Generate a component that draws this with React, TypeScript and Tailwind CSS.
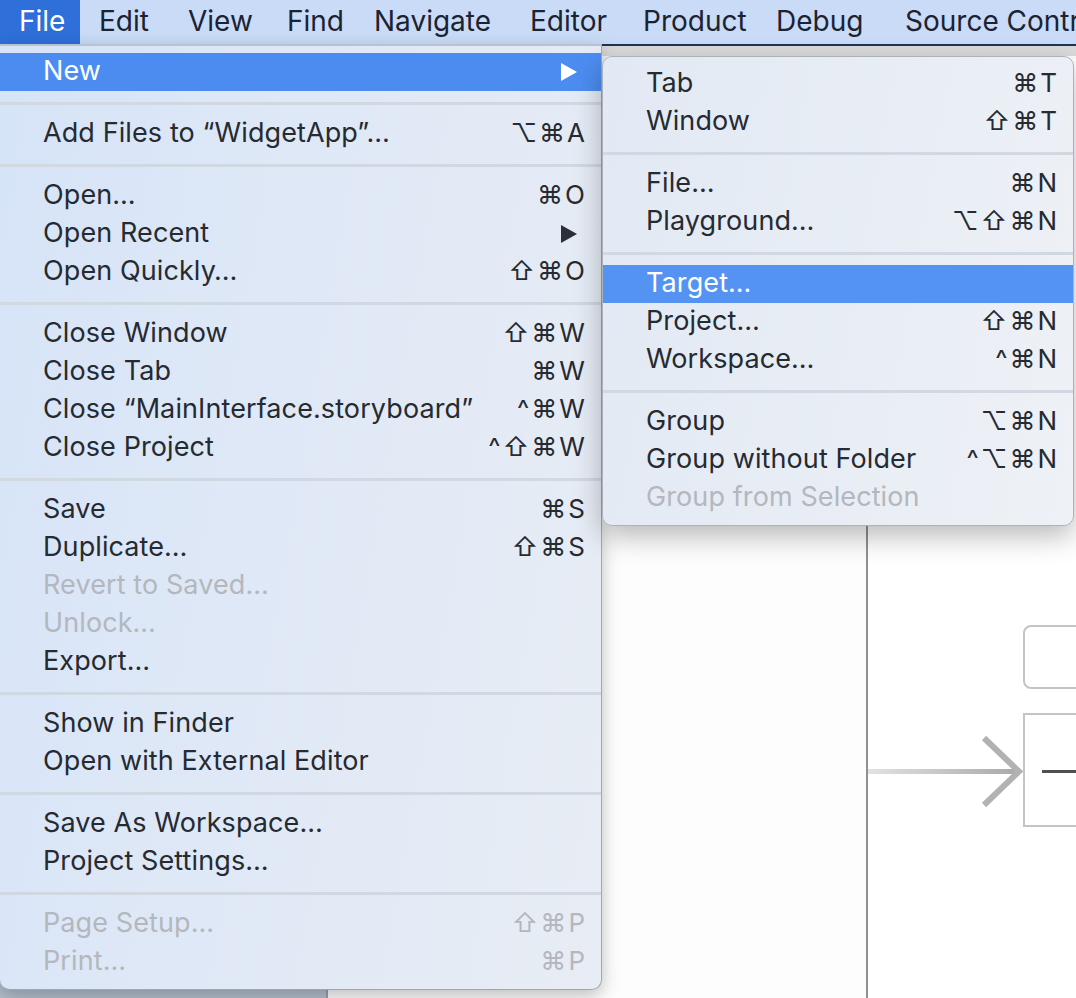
import type { ReactNode } from "react";

type Item =
	| { kind: "sep" }
	| { kind: "item"; label: string; shortcut?: string; arrow?: boolean; disabled?: boolean; active?: boolean };

const MENU_BAR = [
	{ label: "File", width: "w-[80px]" },
	{ label: "Edit", width: "w-[89px]" },
	{ label: "View", width: "w-[99px]" },
	{ label: "Find", width: "w-[87px]" },
	{ label: "Navigate", width: "w-[156px]" },
	{ label: "Editor", width: "w-[113px]" },
	{ label: "Product", width: "w-[133px]" },
	{ label: "Debug", width: "w-[129px]" },
	{ label: "Source Control", width: "w-[220px]" },
];

const FILE_MENU: Item[] = [
	{ kind: "item", label: "New", arrow: true, active: true },
	{ kind: "sep" },
	{ kind: "item", label: "Add Files to \u201cWidgetApp\u201d\u2026", shortcut: "\u2325\u2318A" },
	{ kind: "sep" },
	{ kind: "item", label: "Open\u2026", shortcut: "\u2318O" },
	{ kind: "item", label: "Open Recent", arrow: true },
	{ kind: "item", label: "Open Quickly\u2026", shortcut: "\u21e7\u2318O" },
	{ kind: "sep" },
	{ kind: "item", label: "Close Window", shortcut: "\u21e7\u2318W" },
	{ kind: "item", label: "Close Tab", shortcut: "\u2318W" },
	{ kind: "item", label: "Close \u201cMainInterface.storyboard\u201d", shortcut: "^\u2318W" },
	{ kind: "item", label: "Close Project", shortcut: "^\u21e7\u2318W" },
	{ kind: "sep" },
	{ kind: "item", label: "Save", shortcut: "\u2318S" },
	{ kind: "item", label: "Duplicate\u2026", shortcut: "\u21e7\u2318S" },
	{ kind: "item", label: "Revert to Saved\u2026", disabled: true },
	{ kind: "item", label: "Unlock\u2026", disabled: true },
	{ kind: "item", label: "Export\u2026" },
	{ kind: "sep" },
	{ kind: "item", label: "Show in Finder" },
	{ kind: "item", label: "Open with External Editor" },
	{ kind: "sep" },
	{ kind: "item", label: "Save As Workspace\u2026" },
	{ kind: "item", label: "Project Settings\u2026" },
	{ kind: "sep" },
	{ kind: "item", label: "Page Setup\u2026", shortcut: "\u21e7\u2318P", disabled: true },
	{ kind: "item", label: "Print\u2026", shortcut: "\u2318P", disabled: true },
];

const NEW_MENU: Item[] = [
	{ kind: "item", label: "Tab", shortcut: "\u2318T" },
	{ kind: "item", label: "Window", shortcut: "\u21e7\u2318T" },
	{ kind: "sep" },
	{ kind: "item", label: "File\u2026", shortcut: "\u2318N" },
	{ kind: "item", label: "Playground\u2026", shortcut: "\u2325\u21e7\u2318N" },
	{ kind: "sep" },
	{ kind: "item", label: "Target\u2026", active: true },
	{ kind: "item", label: "Project\u2026", shortcut: "\u21e7\u2318N" },
	{ kind: "item", label: "Workspace\u2026", shortcut: "^\u2318N" },
	{ kind: "sep" },
	{ kind: "item", label: "Group", shortcut: "\u2325\u2318N" },
	{ kind: "item", label: "Group without Folder", shortcut: "^\u2325\u2318N" },
	{ kind: "item", label: "Group from Selection", disabled: true },
];

function Arrow({ light }: { light?: boolean }) {
	return (
		<svg width="18" height="20" viewBox="0 0 18 20" className={light ? "fill-white" : "fill-[#2b2f36]"}>
			<path d="M1 1 L17 10 L1 19 Z" />
		</svg>
	);
}

function MenuRows({ items, activeClass }: { items: Item[]; activeClass: string }) {
	return (
		<>
			{items.map((item, i) => {
				if (item.kind === "sep") {
					return (
						<div key={i} className="h-[24px] flex items-center">
							<div className="h-[3px] w-full bg-[#d2d8e1]" />
						</div>
					);
				}
				const color = item.active ? "text-white" : item.disabled ? "text-[#b4b7bc]" : "text-[#262a31]";
				return (
					<div
						key={i}
						className={`h-[38px] flex items-center justify-between pl-[43px] pr-[16px] pb-[3px] ${color} ${item.active ? activeClass : ""}`}
					>
						<span className="tracking-[0.1px]">{item.label}</span>
						{item.shortcut && <span className="tracking-[2px] mr-[-2px] text-[26px]">{item.shortcut}</span>}
						{item.arrow && (
							<span className="pr-[7px] pt-[3px]">
								<Arrow light={item.active} />
							</span>
						)}
					</div>
				);
			})}
		</>
	);
}

function Canvas({ children }: { children: ReactNode }) {
	return <div className="relative flex-1 bg-white overflow-hidden">{children}</div>;
}

export default function App() {
	return (
		<div
			className="relative w-[1076px] h-[998px] overflow-hidden bg-white text-[27px] leading-none"
			style={{ fontFamily: "Inter, 'Noto Sans', 'DejaVu Sans', sans-serif" }}
		>
			{/* menu bar */}
			<div className="h-[44px] flex bg-[#c9dbf6] text-[#1b2332] text-[28px]">
				{MENU_BAR.map((m, i) => (
					<div
						key={m.label}
						className={`${m.width} shrink-0 h-full flex items-center pl-[19px] pb-[2px] whitespace-nowrap ${i === 0 ? "bg-[#2e6fd9] text-white" : ""}`}
					>
						{m.label}
					</div>
				))}
			</div>

			{/* window behind the menus */}
			<div className="h-[2px] bg-[#1d3458]" />
			<div className="h-[10px] bg-[#dcdbdc]" />
			<div className="flex h-[942px]">
				<div className="w-[328px] bg-[#b4bfcd] border-r-2 border-[#98a0ab]" />
				<div className="w-[538px] bg-[#fdfdfd]" />
				<div className="w-[2px] bg-[#909090]" />
				<Canvas>
					<div className="absolute left-[155px] top-[569px] w-[80px] h-[64px] rounded-[8px] border-2 border-[#c4c4c4] bg-white" />
					<div className="absolute left-[155px] top-[657px] w-[80px] h-[114px] border-2 border-[#c4c4c4] bg-white">
						<div className="mt-[55px] ml-[17px] h-[3px] w-[60px] bg-[#505050]" />
					</div>
					<svg className="absolute left-0 top-[660px]" width="160" height="110" viewBox="0 0 160 110">
						<defs>
							<linearGradient id="arrowLine" x1="0" x2="1" y1="0" y2="0">
								<stop offset="0" stopColor="#e2e2e2" />
								<stop offset="1" stopColor="#a9a9a9" />
							</linearGradient>
						</defs>
						<rect x="0" y="53" width="150" height="5" fill="url(#arrowLine)" />
						<path d="M116 22 L151 55.5 L116 89" fill="none" stroke="#b2b2b2" strokeWidth="6" />
					</svg>
				</Canvas>
			</div>

			{/* File menu */}
			<div className="absolute left-0 top-[44px] w-[602px] pt-[7px] pb-[8px] border-t-2 border-t-[#b7c2d2] border-r border-b border-[#a2a7ae] rounded-b-[10px] bg-[linear-gradient(100deg,#d6e4f8_0%,#e1e9f6_55%,#e8edf4_100%)] shadow-[0_6px_18px_rgba(0,0,0,0.25)]">
				<MenuRows items={FILE_MENU} activeClass="bg-[#4c8cf1]" />
			</div>

			{/* New submenu */}
			<div className="absolute left-[602px] top-[56px] w-[472px] py-[8px] rounded-[10px] border border-[#aeb2b8] bg-[linear-gradient(100deg,#e2e9f4_0%,#e9eef5_60%,#eef1f6_100%)] shadow-[0_10px_28px_rgba(0,0,0,0.28)]">
				<MenuRows items={NEW_MENU} activeClass="bg-[#5593f3]" />
			</div>
		</div>
	);
}
